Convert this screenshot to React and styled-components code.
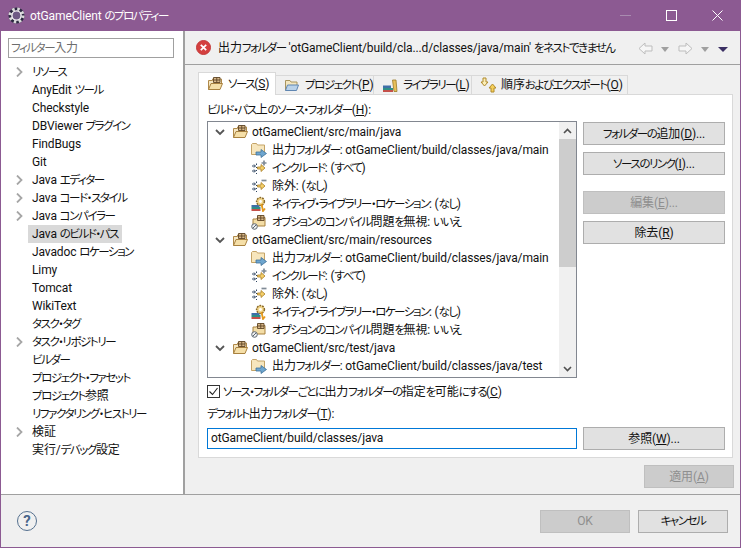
import React from 'react';
import styled, { createGlobalStyle } from 'styled-components';

const GlobalStyle = createGlobalStyle`
  html, body {
    margin: 0;
    padding: 0;
    background: #f0f0f0;
  }
  body {
    font-family: Roboto, "Noto Sans CJK JP", sans-serif;
    font-size: 12px;
    line-height: 18px;
    letter-spacing: -0.12px;
    color: #111;
    font-feature-settings: "palt";
  }
  svg {
    flex: none;
  }
`;

const Window = styled.div`
  width: 741px;
  height: 548px;
  box-sizing: border-box;
  display: flex;
  flex-direction: column;
  border: solid #8c5a92;
  border-width: 0 1px 1px 1px;
  overflow: hidden;
`;

const TitleBar = styled.div`
  height: 31px;
  flex: none;
  margin: 0 -1px;
  display: flex;
  align-items: center;
  padding: 0 1px 0 8px;
  background: #8c5a92;
  color: #fff;
  font-size: 12px;
`;

const TitleText = styled.span`
  margin-left: 5px;
  flex: 1;
`;

const WindowButton = styled.div`
  width: 46px;
  height: 31px;
  display: flex;
  align-items: center;
  justify-content: center;
`;

const Body = styled.div`
  flex: 1;
  min-height: 0;
  display: flex;
  border-bottom: 1px solid #a0a0a0;
`;

const Sidebar = styled.div`
  width: 175px;
  flex: none;
  background: #fff;
  border-right: 2px solid #a0a0a0;
  padding: 7px 0 0 7px;
`;

const FilterInput = styled.div`
  width: 162px;
  height: 18px;
  border: 1px solid #a0a0a0;
  color: #6d6d6d;
  padding-left: 2px;
  margin-bottom: 5px;
`;

const NavRow = styled.div`
  height: 18px;
  display: flex;
  align-items: center;
  position: relative;
`;

const NavLabel = styled.span`
  margin-left: 20px;
  padding: 0 4px;
  height: 18px;
  white-space: nowrap;
  background: ${(p) => (p.$selected ? '#d9d9d9' : 'transparent')};
`;

const NavArrow = styled.div`
  position: absolute;
  left: 7px;
  top: 4px;
  line-height: 0;
`;

const Main = styled.div`
  flex: 1;
  min-width: 0;
  display: flex;
  flex-direction: column;
`;

const MessageBar = styled.div`
  height: 33px;
  flex: none;
  display: flex;
  align-items: center;
  padding-left: 11px;
  border-bottom: 1px solid #a0a0a0;
`;

const MessageText = styled.span`
  margin-left: 7px;
  flex: 1;
  white-space: nowrap;
`;

const NavTools = styled.div`
  display: flex;
  align-items: center;
  padding-right: 12px;
  padding-top: 2px;
`;

const Content = styled.div`
  flex: 1;
  min-height: 0;
  padding: 7px 6px 0 13px;
`;

const TabStrip = styled.div`
  display: flex;
  align-items: flex-end;
  height: 23px;
  position: relative;
  z-index: 1;
`;

const Tab = styled.div`
  display: flex;
  align-items: center;
  gap: 5px;
  height: ${(p) => (p.$active ? '23px' : '20px')};
  box-sizing: border-box;
  width: ${(p) => p.$width}px;
  padding-left: 8px;
  white-space: nowrap;
  background: ${(p) => (p.$active ? '#fff' : '#f0f0f0')};
  border: 1px solid #d9d9d9;
  border-bottom: ${(p) => (p.$active ? '0' : '1px solid #d9d9d9')};
  border-left: ${(p) => (p.$first ? '1px solid #d9d9d9' : '0')};
`;

const TabPanel = styled.div`
  width: 535px;
  height: 364px;
  box-sizing: border-box;
  margin-top: -1px;
  background: #fff;
  border: 1px solid #d9d9d9;
  padding: 6px 8px 0 8px;
`;

const FieldLabel = styled.div`
  height: 20px;
  white-space: nowrap;
`;

const SourceRow = styled.div`
  display: flex;
  gap: 6px;
`;

const TreeBox = styled.div`
  width: 370px;
  height: 257px;
  box-sizing: border-box;
  flex: none;
  display: flex;
  border: 1px solid #828790;
`;

const TreeList = styled.div`
  flex: 1;
  min-width: 0;
  overflow: hidden;
  padding-top: 1px;
`;

const TreeRow = styled.div`
  height: 18px;
  display: flex;
  align-items: center;
  padding-left: ${(p) => (p.$child ? '43px' : '7px')};
  white-space: nowrap;
`;

const TreeToggle = styled.div`
  margin-right: 7px;
  line-height: 0;
`;

const TreeText = styled.span`
  margin-left: ${(p) => (p.$child ? '5px' : '4px')};
`;

const ScrollBar = styled.div`
  width: 17px;
  flex: none;
  background: #f0f0f0;
  display: flex;
  flex-direction: column;
`;

const ScrollArrow = styled.div`
  height: 17px;
  display: flex;
  align-items: center;
  justify-content: center;
`;

const ScrollThumb = styled.div`
  height: 128px;
  background: #cdcdcd;
`;

const ScrollGap = styled.div`
  flex: 1;
`;

const ButtonColumn = styled.div`
  display: flex;
  flex-direction: column;
  width: 142px;
  padding-top: 1px;
`;

const Button = styled.div`
  width: ${(p) => p.$width || 142}px;
  height: 23px;
  box-sizing: border-box;
  flex: none;
  display: flex;
  align-items: center;
  justify-content: center;
  white-space: nowrap;
  background: ${(p) => (p.$disabled ? '#cccccc' : '#e1e1e1')};
  border: 1px solid ${(p) => (p.$disabled ? '#bfbfbf' : '#adadad')};
  color: ${(p) => (p.$disabled ? '#8f8f8f' : '#111')};
  margin-top: ${(p) => p.$top || 0}px;
`;

const CheckRow = styled.div`
  display: flex;
  align-items: center;
  gap: 3px;
  height: 13px;
  margin-top: 7px;
  white-space: nowrap;
`;

const CheckBox = styled.div`
  width: 13px;
  height: 13px;
  box-sizing: border-box;
  border: 1px solid #333;
  background: #fff;
  display: flex;
  align-items: center;
  justify-content: center;
`;

const OutputLabel = styled(FieldLabel)`
  margin-top: 7px;
  height: 19px;
`;

const OutputRow = styled.div`
  display: flex;
  align-items: center;
  gap: 6px;
  margin-top: 3px;
`;

const TextInput = styled.div`
  width: 370px;
  height: 21px;
  box-sizing: border-box;
  flex: none;
  border: 1px solid #0078d7;
  line-height: 19px;
  padding-left: 3px;
`;

const ApplyRow = styled.div`
  display: flex;
  justify-content: flex-end;
  padding-top: 7px;
`;

const Footer = styled.div`
  height: 52px;
  flex: none;
  display: flex;
  align-items: center;
  padding: 0 12px 0 16px;
`;

const HelpButton = styled.div`
  width: 18px;
  height: 18px;
  border: 1px solid #55708f;
  border-radius: 50%;
  display: flex;
  align-items: center;
  justify-content: center;
  color: #4a668a;
  font-size: 15px;
  font-weight: 700;
  flex: none;
`;

const FooterGap = styled.div`
  flex: 1;
`;

const FooterButtons = styled.div`
  display: flex;
  gap: 8px;
`;

const Kana = styled.span`
  font-size: 11.5px;
  letter-spacing: -1.45px;
`;

const Key = styled.span`
  text-decoration: underline;
`;

// kana comes out much wider than in the original UI font, so squeeze those runs only
const ja = (text) =>
  text.split(/([\u3040-\u30ff]+)/).map((part, i) =>
    i % 2 ? <Kana key={i}>{part}</Kana> : part
  );

const Label = ({ text, k, tail = '' }) => (
  <span>
    {ja(text)}
    {k && (
      <>
        (<Key>{k}</Key>){tail}
      </>
    )}
  </span>
);

const Gear = () => (
  <svg width="17" height="17" viewBox="0 0 17 17">
    <circle cx="8.5" cy="8.5" r="6.5" fill="none" stroke="#2b2840" strokeWidth="3" />
    <circle cx="8.5" cy="8.5" r="6.5" fill="none" stroke="#d9d9d9" strokeWidth="3" strokeDasharray="2.5 2.6" />
    <circle cx="8.5" cy="8.5" r="4.6" fill="#6f5a85" stroke="#f4f4f4" strokeWidth="1.4" />
  </svg>
);

const ErrorIcon = () => (
  <svg width="15" height="15" viewBox="0 0 15 15">
    <circle cx="7.5" cy="7.5" r="7" fill="#d4403f" stroke="#c43a3a" />
    <path d="M4.8 4.8l5.4 5.4M10.2 4.8l-5.4 5.4" stroke="#fff" strokeWidth="1.7" />
  </svg>
);

const PackageFolder = () => (
  <svg width="16" height="16" viewBox="0 0 16 16">
    <path d="M1.500 13.500V4.500h4V3h9v5" fill="#f6e7c2" stroke="#b08a4a" />
    <path d="M1.500 13.500L4 7.500h11.500l-2.500 6z" fill="#f5dfa8" stroke="#a8813f" />
    <path d="M6.500 1.500h6.500v5H6.500zM9.750 1.500v5M6.500 4h6.500" fill="#d9b98a" stroke="#5f4526" strokeWidth="0.9" />
  </svg>
);

const OutputFolder = () => (
  <svg width="16" height="16" viewBox="0 0 16 16">
    <path d="M0.500 12.500V2.500l1-1h4l1 1.500h7v9.500z" fill="#f7e6bd" stroke="#c4a366" />
    <path d="M5 10h5V7.500l5.500 4-5.500 4V13H5z" fill="#6ea6cf" stroke="#3f7199" strokeWidth="0.8" />
  </svg>
);

const FilterBase = () => (
  <>
    <path d="M1 6h3M3 4.500L4.500 6 3 7.500M1 11h3M3 9.500L4.500 11 3 12.500" fill="none" stroke="#2f4560" />
    <path d="M5.500 3.500v1.500M5.500 7v1M5.500 10v1M5.500 13v1" stroke="#2f4560" />
    <path d="M6.500 7h3.500V4.500l4 3.500-4 3.500V9H6.500z" fill="#f4cf6a" stroke="#a97f25" strokeWidth="0.8" />
  </>
);

const IncludeIcon = () => (
  <svg width="16" height="16" viewBox="0 0 16 16">
    <FilterBase />
    <path d="M10.500 3h5M13 0.500v5" stroke="#808b96" strokeWidth="1.700" />
  </svg>
);

const ExcludeIcon = () => (
  <svg width="16" height="16" viewBox="0 0 16 16">
    <FilterBase />
    <path d="M10.500 2.500h5" stroke="#808b96" strokeWidth="1.700" />
  </svg>
);

const NativeIcon = () => (
  <svg width="16" height="16" viewBox="0 0 16 16">
    <rect x="0.500" y="9" width="8" height="2" fill="#3f6fa8" />
    <rect x="0.500" y="11" width="9" height="2" fill="#2f8f86" />
    <rect x="0.500" y="13" width="9" height="2" fill="#c4504a" />
    <circle cx="9.500" cy="5.500" r="3.900" fill="#f3d78a" stroke="#8a6a2c" strokeDasharray="1.8 1" strokeWidth="1.500" />
    <circle cx="9.500" cy="5.500" r="1.400" fill="#fff" />
    <path d="M10.500 8l1.500 7 2-2.500" fill="none" stroke="#e59a1c" strokeWidth="1.800" />
  </svg>
);

const IgnoreIcon = () => (
  <svg width="16" height="16" viewBox="0 0 16 16">
    <path d="M2 12V5h3.500l1-1.500h7.500V12z" fill="#f3dda6" stroke="#a8813f" />
    <path d="M6.500 1.500h6.500v5H6.500zM9.750 1.500v5M6.500 4h6.500" fill="#d9b98a" stroke="#5f4526" strokeWidth="0.9" />
    <circle cx="3.500" cy="12.500" r="2.800" fill="#eef0f2" stroke="#5c6670" />
    <path d="M1.800 14.200l3.400-3.400" stroke="#5c6670" />
  </svg>
);

const ProjectIcon = () => (
  <svg width="16" height="16" viewBox="0 0 16 16">
    <path d="M1.500 13.500V3.500h4.500l1 1.500h6v3" fill="#f3e6bf" stroke="#a8945f" />
    <path d="M1.500 13.500l2-5.500h11l-2 5.500z" fill="#b9d2ea" stroke="#5f86b2" />
  </svg>
);

const LibraryIcon = () => (
  <svg width="16" height="16" viewBox="0 0 16 16">
    <rect x="1" y="8.500" width="8" height="2.500" fill="#3f6fa8" />
    <rect x="1" y="11" width="10" height="2" fill="#2f8f86" />
    <rect x="1" y="13" width="10" height="2" fill="#c4504a" />
    <path d="M10.500 3l3.500 0 1 11.500h-3z" fill="#e8c05a" stroke="#9a7a26" strokeWidth="0.8" />
  </svg>
);

const OrderIcon = () => (
  <svg width="16" height="16" viewBox="0 0 16 16">
    <path d="M3 1h3v4h2l-3.500 4L1 5h2z" fill="#fbeeb8" stroke="#b08a2a" />
    <path d="M11 15h3v-4h2l-3.500-4L9 11h2z" fill="#f5cf5a" stroke="#b08a2a" />
  </svg>
);

const Chevron = ({ open }) => (
  <svg width="10" height="10" viewBox="0 0 10 10">
    <path
      d={open ? 'M1 3l4 4 4-4' : 'M2 0.500l4.500 4.500L2 9.500'}
      fill="none"
      stroke={open ? '#555' : '#a6a6a6'}
      strokeWidth="1.8"
    />
  </svg>
);

const ArrowLeft = () => (
  <svg width="15" height="13" viewBox="0 0 15 13">
    <path d="M7 1L1 6.500 7 12V9h7V4H7z" fill="#f6f6f6" stroke="#bdbdbd" />
  </svg>
);

const ArrowRight = () => (
  <svg width="15" height="13" viewBox="0 0 15 13">
    <path d="M8 1l6 5.500L8 12V9H1V4h7z" fill="#f6f6f6" stroke="#bdbdbd" />
  </svg>
);

const DropArrow = styled.svg`
  margin: ${(p) => (p.$plain ? '0' : '0 9px 0 8px')};
`;

const Drop = ({ color, w = 8, plain }) => (
  <DropArrow $plain={plain} width={w} height="6" viewBox={`0 0 ${w} 6`}>
    <path d={`M0 1h${w}L${w / 2} 6z`} fill={color} />
  </DropArrow>
);

const navItems = [
  ['リソース', true],
  ['AnyEdit ツール'],
  ['Checkstyle'],
  ['DBViewer プラグイン'],
  ['FindBugs'],
  ['Git'],
  ['Java エディター', true],
  ['Java コード・スタイル', true],
  ['Java コンパイラー', true],
  ['Java のビルド・パス', false, true],
  ['Javadoc ロケーション'],
  ['Limy'],
  ['Tomcat'],
  ['WikiText'],
  ['タスク・タグ'],
  ['タスク・リポジトリー', true],
  ['ビルダー'],
  ['プロジェクト・ファセット'],
  ['プロジェクト参照'],
  ['リファクタリング・ヒストリー'],
  ['検証', true],
  ['実行/デバッグ設定'],
];

const sourceChildren = (output) => [
  [OutputFolder, `出力フォルダー: otGameClient/build/classes/java/${output}`],
  [IncludeIcon, 'インクルード: (すべて)'],
  [ExcludeIcon, '除外: (なし)'],
  [NativeIcon, 'ネイティブ・ライブラリー・ロケーション: (なし)'],
  [IgnoreIcon, 'オプションのコンパイル問題を無視: いいえ'],
];

const sources = [
  { path: 'otGameClient/src/main/java', rows: sourceChildren('main') },
  { path: 'otGameClient/src/main/resources', rows: sourceChildren('main') },
  { path: 'otGameClient/src/test/java', rows: sourceChildren('test').slice(0, 1) },
];

export default function App() {
  return (
    <>
      <GlobalStyle />
      <Window>
        <TitleBar>
          <Gear />
          <TitleText>{ja('otGameClient のプロパティー')}</TitleText>
          <WindowButton>
            <svg width="11" height="11" viewBox="0 0 11 11">
              <path d="M0 5.500h11" stroke="#a98bb0" />
            </svg>
          </WindowButton>
          <WindowButton>
            <svg width="11" height="11" viewBox="0 0 11 11">
              <rect x="0.500" y="0.500" width="10" height="10" fill="none" stroke="#fff" />
            </svg>
          </WindowButton>
          <WindowButton>
            <svg width="11" height="11" viewBox="0 0 11 11">
              <path d="M0.500 0.500l10 10M10.500 0.500l-10 10" stroke="#fff" />
            </svg>
          </WindowButton>
        </TitleBar>
        <Body>
          <Sidebar>
            <FilterInput>{ja('フィルター入力')}</FilterInput>
            {navItems.map(([name, arrow, selected]) => (
              <NavRow key={name}>
                {arrow && (
                  <NavArrow>
                    <Chevron />
                  </NavArrow>
                )}
                <NavLabel $selected={selected}>{ja(name)}</NavLabel>
              </NavRow>
            ))}
          </Sidebar>
          <Main>
            <MessageBar>
              <ErrorIcon />
              <MessageText>
                {ja("出力フォルダー 'otGameClient/build/cla...d/classes/java/main' をネストできません")}
              </MessageText>
              <NavTools>
                <ArrowLeft />
                <Drop color="#a0a0a0" />
                <ArrowRight />
                <Drop color="#a0a0a0" />
                <Drop color="#3b2f63" w={10} plain />
              </NavTools>
            </MessageBar>
            <Content>
              <TabStrip>
                <Tab $active $first $width={78}>
                  <PackageFolder />
                  <Label text="ソース" k="S" />
                </Tab>
                <Tab $width={98}>
                  <ProjectIcon />
                  <Label text="プロジェクト" k="P" />
                </Tab>
                <Tab $width={98}>
                  <LibraryIcon />
                  <Label text="ライブラリー" k="L" />
                </Tab>
                <Tab $width={156}>
                  <OrderIcon />
                  <Label text="順序およびエクスポート" k="O" />
                </Tab>
              </TabStrip>
              <TabPanel>
                <FieldLabel>
                  <Label text="ビルド・パス上のソース・フォルダー" k="H" tail=":" />
                </FieldLabel>
                <SourceRow>
                  <TreeBox>
                    <TreeList>
                      {sources.map((src) => (
                        <React.Fragment key={src.path}>
                          <TreeRow>
                            <TreeToggle>
                              <Chevron open />
                            </TreeToggle>
                            <PackageFolder />
                            <TreeText>{src.path}</TreeText>
                          </TreeRow>
                          {src.rows.map(([Icon, text]) => (
                            <TreeRow $child key={text}>
                              <Icon />
                              <TreeText $child>{ja(text)}</TreeText>
                            </TreeRow>
                          ))}
                        </React.Fragment>
                      ))}
                    </TreeList>
                    <ScrollBar>
                      <ScrollArrow>
                        <svg width="9" height="6" viewBox="0 0 9 6">
                          <path d="M1 5l3.500-3.500L8 5" fill="none" stroke="#505050" strokeWidth="1.600" />
                        </svg>
                      </ScrollArrow>
                      <ScrollThumb />
                      <ScrollGap />
                      <ScrollArrow>
                        <svg width="9" height="6" viewBox="0 0 9 6">
                          <path d="M1 1l3.500 3.500L8 1" fill="none" stroke="#505050" strokeWidth="1.600" />
                        </svg>
                      </ScrollArrow>
                    </ScrollBar>
                  </TreeBox>
                  <ButtonColumn>
                    <Button>
                      <Label text="フォルダーの追加" k="D" tail="..." />
                    </Button>
                    <Button $top={7}>
                      <Label text="ソースのリンク" k="I" tail="..." />
                    </Button>
                    <Button $disabled $top={16}>
                      <Label text="編集" k="E" tail="..." />
                    </Button>
                    <Button $top={7}>
                      <Label text="除去" k="R" />
                    </Button>
                  </ButtonColumn>
                </SourceRow>
                <CheckRow>
                  <CheckBox>
                    <svg width="11" height="11" viewBox="0 0 11 11">
                      <path d="M1.500 5.500l3 3 5-6.500" fill="none" stroke="#222" strokeWidth="1.100" />
                    </svg>
                  </CheckBox>
                  <Label text="ソース・フォルダーごとに出力フォルダーの指定を可能にする" k="C" />
                </CheckRow>
                <OutputLabel>
                  <Label text="デフォルト出力フォルダー" k="T" tail=":" />
                </OutputLabel>
                <OutputRow>
                  <TextInput>otGameClient/build/classes/java</TextInput>
                  <Button>
                    <Label text="参照" k="W" tail="..." />
                  </Button>
                </OutputRow>
              </TabPanel>
              <ApplyRow>
                <Button $disabled $width={90}>
                  <Label text="適用" k="A" />
                </Button>
              </ApplyRow>
            </Content>
          </Main>
        </Body>
        <Footer>
          <HelpButton>?</HelpButton>
          <FooterGap />
          <FooterButtons>
            <Button $disabled $width={90}>
              OK
            </Button>
            <Button $width={90}>{ja('キャンセル')}</Button>
          </FooterButtons>
        </Footer>
      </Window>
    </>
  );
}
